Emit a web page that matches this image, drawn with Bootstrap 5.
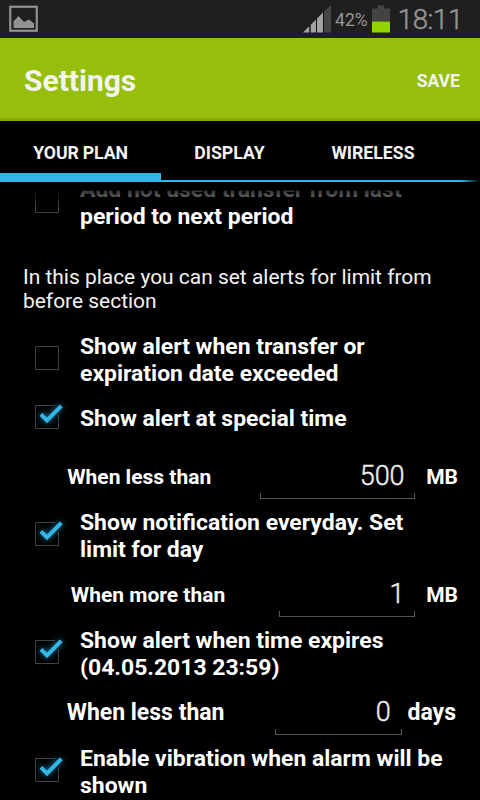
<!DOCTYPE html>
<html lang="en">
<head>
<meta charset="utf-8">
<meta name="viewport" content="width=device-width, initial-scale=1">
<title>Settings</title>
<link href="https://cdn.jsdelivr.net/npm/bootstrap@5.3.0/dist/css/bootstrap.min.css" rel="stylesheet">
<style>
body{font-family:Roboto,"Liberation Sans",sans-serif;background:#000;color:#fff;height:800px;overflow:hidden}
.status-strip{height:38px;background:#1f1f1f;color:#969696;padding:0 17px 0 9px}
.pct{font-size:17.6px;line-height:38px;margin:2px 4px 0 3px}
.clock{font-size:27.5px;line-height:36px;font-weight:300;-webkit-text-stroke:.5px;letter-spacing:-.3px;margin:2px 0 0 8px;color:#949494}
.app-bar{height:83px;background:#95bf0a;border-bottom:3px solid #87ab09;padding:4px 20px 0 24px;color:#f3f3f3}
.app-title{font-size:30px;line-height:1;padding-top:2px}
.save-btn,.save-btn:hover{font-size:17.6px;color:#f3f3f3;line-height:1;margin-top:3px}
.tab-strip{height:61px;position:relative}
.tab-strip .nav-link{font-size:17.7px;line-height:20px;font-weight:700;color:#f3f3f3;padding:22px 0 0;height:61px;text-align:center;border-bottom:0 solid #33b5e5}
.tab-strip .tab-plan{width:161px;letter-spacing:-.15px}.tab-display{width:137px}.tab-wireless{width:150px}
.tab-strip .nav-link.active{border-bottom-width:9px}
.rule{height:2px;left:161px;right:0;bottom:0;background:linear-gradient(90deg,#33b5e5 94%,transparent)}
.pane{height:618px}
.pane-inner{margin-top:-6px}
.pane-fade{height:22px;top:0;left:0;right:0;background:linear-gradient(#000 8px,rgba(0,0,0,.8) 9px,rgba(0,0,0,.6) 16px,transparent 22px)}
.opt{padding-left:35px;font-size:22.95px;line-height:27px;font-weight:700}
.opt-text{margin-left:21px}
.box{width:24px;height:24px;flex:none;overflow:visible}
.two-line .box{margin-top:13px}
.one-line{padding-bottom:13px;margin-top:18px}
.glow{filter:drop-shadow(0 0 3px #1583ab)}
.note{font-size:20.95px;line-height:24px;padding:0 23px;margin:35px 0 20px;color:#f3f3f3}
.limit{height:64px;padding-right:23px;font-weight:700;font-size:21px;line-height:24px}
.limit.wide{font-size:23px}
.limit>span{margin-top:20px}
.entry{height:42px;margin-top:12px;font-size:27px;font-weight:300;-webkit-text-stroke:.45px;line-height:39px;letter-spacing:-.2px;text-align:right;padding-right:11px;color:#ececec;
background:linear-gradient(#555,#555) left bottom/1px 6px no-repeat,linear-gradient(#555,#555) right bottom/1px 6px no-repeat,linear-gradient(#555,#555) left bottom/100% 1px no-repeat}
.e-mb{width:155px;margin-left:49px;margin-right:11px}
.e-day{width:136px;margin-left:54px;margin-right:11px}
.e-exp{width:127px;margin-left:50px;margin-right:6px}
.unit-mb{margin-right:-1px}
.unit-days{margin-right:1px}
</style>
</head>
<body>
<svg class="d-none">
  <symbol id="chk-off" viewBox="0 0 24 24"><path d="M.5.5h23v23H.5z" fill="none" stroke="#424242"/></symbol>
  <symbol id="chk-on" viewBox="0 0 24 24" overflow="visible"><path d="M20 .5H.5v23h23V10" fill="none" stroke="#424242"/><path class="glow" d="M4.500 10.700L7.300 8 12 12.500 24.800-.5 27.700 2.300 12 18.300z" fill="#33b5e5"/></symbol>
</svg>
<header class="status-strip d-flex align-items-center">
  <svg width="30" height="28" viewBox="0 0 30 28"><rect x="1.250" y="1.750" width="26.500" height="24" fill="none" stroke="#929292" stroke-width="2.200"/><path d="M4.500 23V16.500L9.500 11l5.500 6 5-2.500 5 4V23z" fill="#929292"/></svg>
  <svg class="ms-auto" width="29" height="28" viewBox="0 0 29 28"><path d="M0 27.500L6.500 21v6.500zM7.500 20L13 14.500v13H7.500zM14 13.500L20 7.500v20H14z" fill="#a3a3a3"/><path d="M20.500 7L28 0v27.500h-7.500z" fill="#464646"/><path d="M7 20v8M13.500 14v14M20.500 7v21" stroke="#111"/></svg>
  <span class="pct">42%</span>
  <svg width="18" height="28" viewBox="0 0 18 28"><path d="M6 .5h6v3h6v13H0v-13h6z" fill="#444"/><path d="M0 16.500h18v11H0z" fill="#93d300"/></svg>
  <span class="clock">18:11</span>
</header>
<div class="app-bar d-flex align-items-center justify-content-between">
  <h1 class="app-title fw-bold m-0">Settings</h1>
  <button class="save-btn btn border-0 p-0 fw-bold">SAVE</button>
</div>
<nav class="tab-strip nav flex-nowrap">
  <a class="nav-link active tab-plan" href="#">YOUR PLAN</a>
  <a class="nav-link tab-display" href="#">DISPLAY</a>
  <a class="nav-link tab-wireless" href="#">WIRELESS</a>
  <div class="rule position-absolute"></div>
</nav>
<main class="pane overflow-hidden position-relative">
  <div class="pane-inner">
    <div class="opt two-line d-flex"><svg class="box"><use href="#chk-off"/></svg><div class="opt-text">Add not used transfer from last<br>period to next period</div></div>
    <p class="note">In this place you can set alerts for limit from<br>before section</p>
    <div class="opt two-line d-flex"><svg class="box"><use href="#chk-off"/></svg><div class="opt-text">Show alert when transfer or<br>expiration date exceeded</div></div>
    <div class="opt one-line d-flex"><svg class="box"><use href="#chk-on"/></svg><div class="opt-text">Show alert at special time</div></div>
    <div class="limit d-flex justify-content-end align-items-start"><span>When less than</span><div class="entry e-mb">500</div><span class="unit-mb">MB</span></div>
    <div class="opt two-line d-flex"><svg class="box"><use href="#chk-on"/></svg><div class="opt-text">Show notification everyday. Set<br>limit for day</div></div>
    <div class="limit d-flex justify-content-end align-items-start"><span>When more than</span><div class="entry e-day">1</div><span class="unit-mb">MB</span></div>
    <div class="opt two-line d-flex"><svg class="box"><use href="#chk-on"/></svg><div class="opt-text">Show alert when time expires<br>(04.05.2013 23:59)</div></div>
    <div class="limit wide d-flex justify-content-end align-items-start"><span>When less than</span><div class="entry e-exp">0</div><span class="unit-days">days</span></div>
    <div class="opt two-line d-flex"><svg class="box"><use href="#chk-on"/></svg><div class="opt-text">Enable vibration when alarm will be<br>shown</div></div>
  </div>
  <div class="pane-fade position-absolute"></div>
</main>
</body>
</html>
